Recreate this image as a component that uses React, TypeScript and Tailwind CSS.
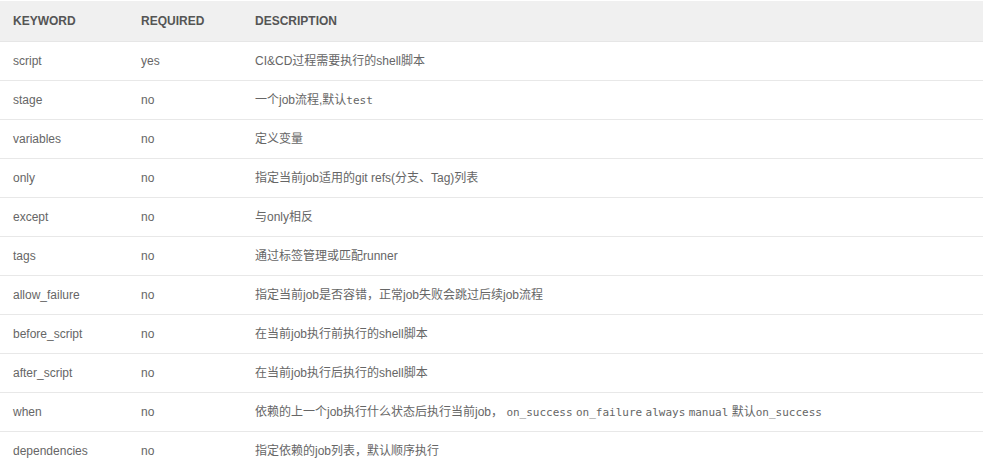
import React from "react";

const rows: { k: string; r: string; d: React.ReactNode }[] = [
  { k: "script", r: "yes", d: "CI&CD过程需要执行的shell脚本" },
  {
    k: "stage",
    r: "no",
    d: (
      <>
        一个job流程,默认<code className="font-['DejaVu_Sans_Mono',monospace] text-[11px]">test</code>
      </>
    ),
  },
  { k: "variables", r: "no", d: "定义变量" },
  { k: "only", r: "no", d: "指定当前job适用的git refs(分支、Tag)列表" },
  { k: "except", r: "no", d: "与only相反" },
  { k: "tags", r: "no", d: "通过标签管理或匹配runner" },
  { k: "allow_failure", r: "no", d: "指定当前job是否容错，正常job失败会跳过后续job流程" },
  { k: "before_script", r: "no", d: "在当前job执行前执行的shell脚本" },
  { k: "after_script", r: "no", d: "在当前job执行后执行的shell脚本" },
  {
    k: "when",
    r: "no",
    d: (
      <>
        依赖的上一个job执行什么状态后执行当前job，{" "}
        <code className="font-['DejaVu_Sans_Mono',monospace] text-[11px]">on_success</code>{" "}
        <code className="font-['DejaVu_Sans_Mono',monospace] text-[11px]">on_failure</code>{" "}
        <code className="font-['DejaVu_Sans_Mono',monospace] text-[11px]">always</code>{" "}
        <code className="font-['DejaVu_Sans_Mono',monospace] text-[11px]">manual</code> 默认
        <code className="font-['DejaVu_Sans_Mono',monospace] text-[11px]">on_success</code>
      </>
    ),
  },
  { k: "dependencies", r: "no", d: "指定依赖的job列表，默认顺序执行" },
];

export default function App() {
  return (
    <div className="w-[983px] h-[470px] overflow-hidden bg-white pt-px font-['Liberation_Sans','Noto_Sans_CJK_SC',sans-serif] text-[12px] text-[#666]">
      <div className="grid grid-cols-[128px_114px_1fr] h-[41px] items-center bg-[#f0f0f0] border-b border-[#e6e6e6] font-bold text-[#555]">
        <div className="pl-[13px]">KEYWORD</div>
        <div className="pl-[13px]">REQUIRED</div>
        <div className="pl-[13px]">DESCRIPTION</div>
      </div>
      {rows.map((row) => (
        <div
          key={row.k}
          className="grid grid-cols-[128px_114px_1fr] h-[39px] items-center border-b border-[#e8e8e8]"
        >
          <div className="pl-[13px]">{row.k}</div>
          <div className="pl-[13px]">{row.r}</div>
          <div className="pl-[13px] whitespace-nowrap">{row.d}</div>
        </div>
      ))}
    </div>
  );
}
